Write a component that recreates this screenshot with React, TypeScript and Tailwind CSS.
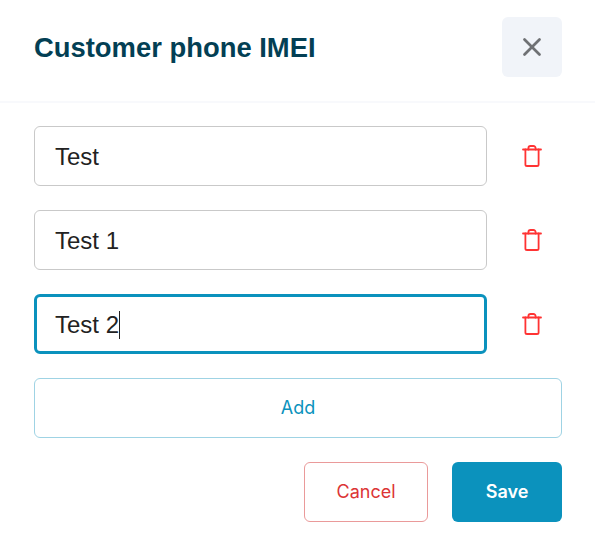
import { X } from 'lucide-react';

const rows = [
  { value: 'Test', focused: false },
  { value: 'Test 1', focused: false },
  { value: 'Test 2', focused: true },
];

function TrashIcon() {
  return (
    <svg width="24" height="24" viewBox="0 0 24 24" fill="none" stroke="#ff3333" strokeWidth="1.8" strokeLinejoin="round" strokeLinecap="round">
      <path d="M3 5.5h18" />
      <path d="M5.4 5.5V20.4a1.6 1.6 0 0 0 1.6 1.6h10a1.6 1.6 0 0 0 1.6-1.6V5.5" />
      <path d="M8.4 5.5V4.2A2.2 2.2 0 0 1 10.6 2h2.8a2.2 2.2 0 0 1 2.2 2.2v1.3" />
    </svg>
  );
}

export default function App() {
  return (
    <div className="w-[595px] h-[543px] bg-white font-['Liberation_Sans',sans-serif] overflow-hidden">
      <header className="h-[103px] pl-[34px] pr-[33px] pt-[17px] border-b-2 border-[#f8f9fc] flex items-start justify-between">
        <h1 className="h-[60px] pt-0.5 flex items-center text-[27.4px] font-bold text-[#033f54]">Customer phone IMEI</h1>
        <button className="w-[60px] h-[60px] rounded-md bg-[#f1f4f9] flex items-center justify-center text-[#6f7174]">
          <X size={30} strokeWidth={2.2} />
        </button>
      </header>

      <div className="pl-[34px] pr-[33px] pt-[23px] flex flex-col gap-6">
        {rows.map((row) => (
          <div key={row.value} className="flex items-center">
            <div
              className={
                row.focused
                  ? 'w-[453px] h-[60px] rounded-md border-[3px] border-[#0b92bd] pl-[18px] pt-0.5 flex items-center text-2xl text-[#222222]'
                  : 'w-[453px] h-[60px] rounded-md border border-[#c9c9c9] pl-5 pt-0.5 flex items-center text-2xl text-[#222222]'
              }
            >
              {row.value}
              {row.focused && <span className="w-px h-7 bg-[#222222]" />}
            </div>
            <button className="ml-[33px] w-6 h-6">
              <TrashIcon />
            </button>
          </div>
        ))}

        <button className="h-[60px] rounded-md border border-[#9fd3e4] text-[#0b92bd] text-lg font-['Inter',sans-serif]">
          Add
        </button>
      </div>

      <div className="pr-[33px] pt-6 flex justify-end gap-6 font-['Inter',sans-serif] text-lg">
        <button className="w-[124px] h-[60px] rounded-md border border-[#ea9a9a] text-[#dc3535]">Cancel</button>
        <button className="w-[110px] h-[60px] rounded-md bg-[#0b92bd] text-white font-semibold">Save</button>
      </div>
    </div>
  );
}
